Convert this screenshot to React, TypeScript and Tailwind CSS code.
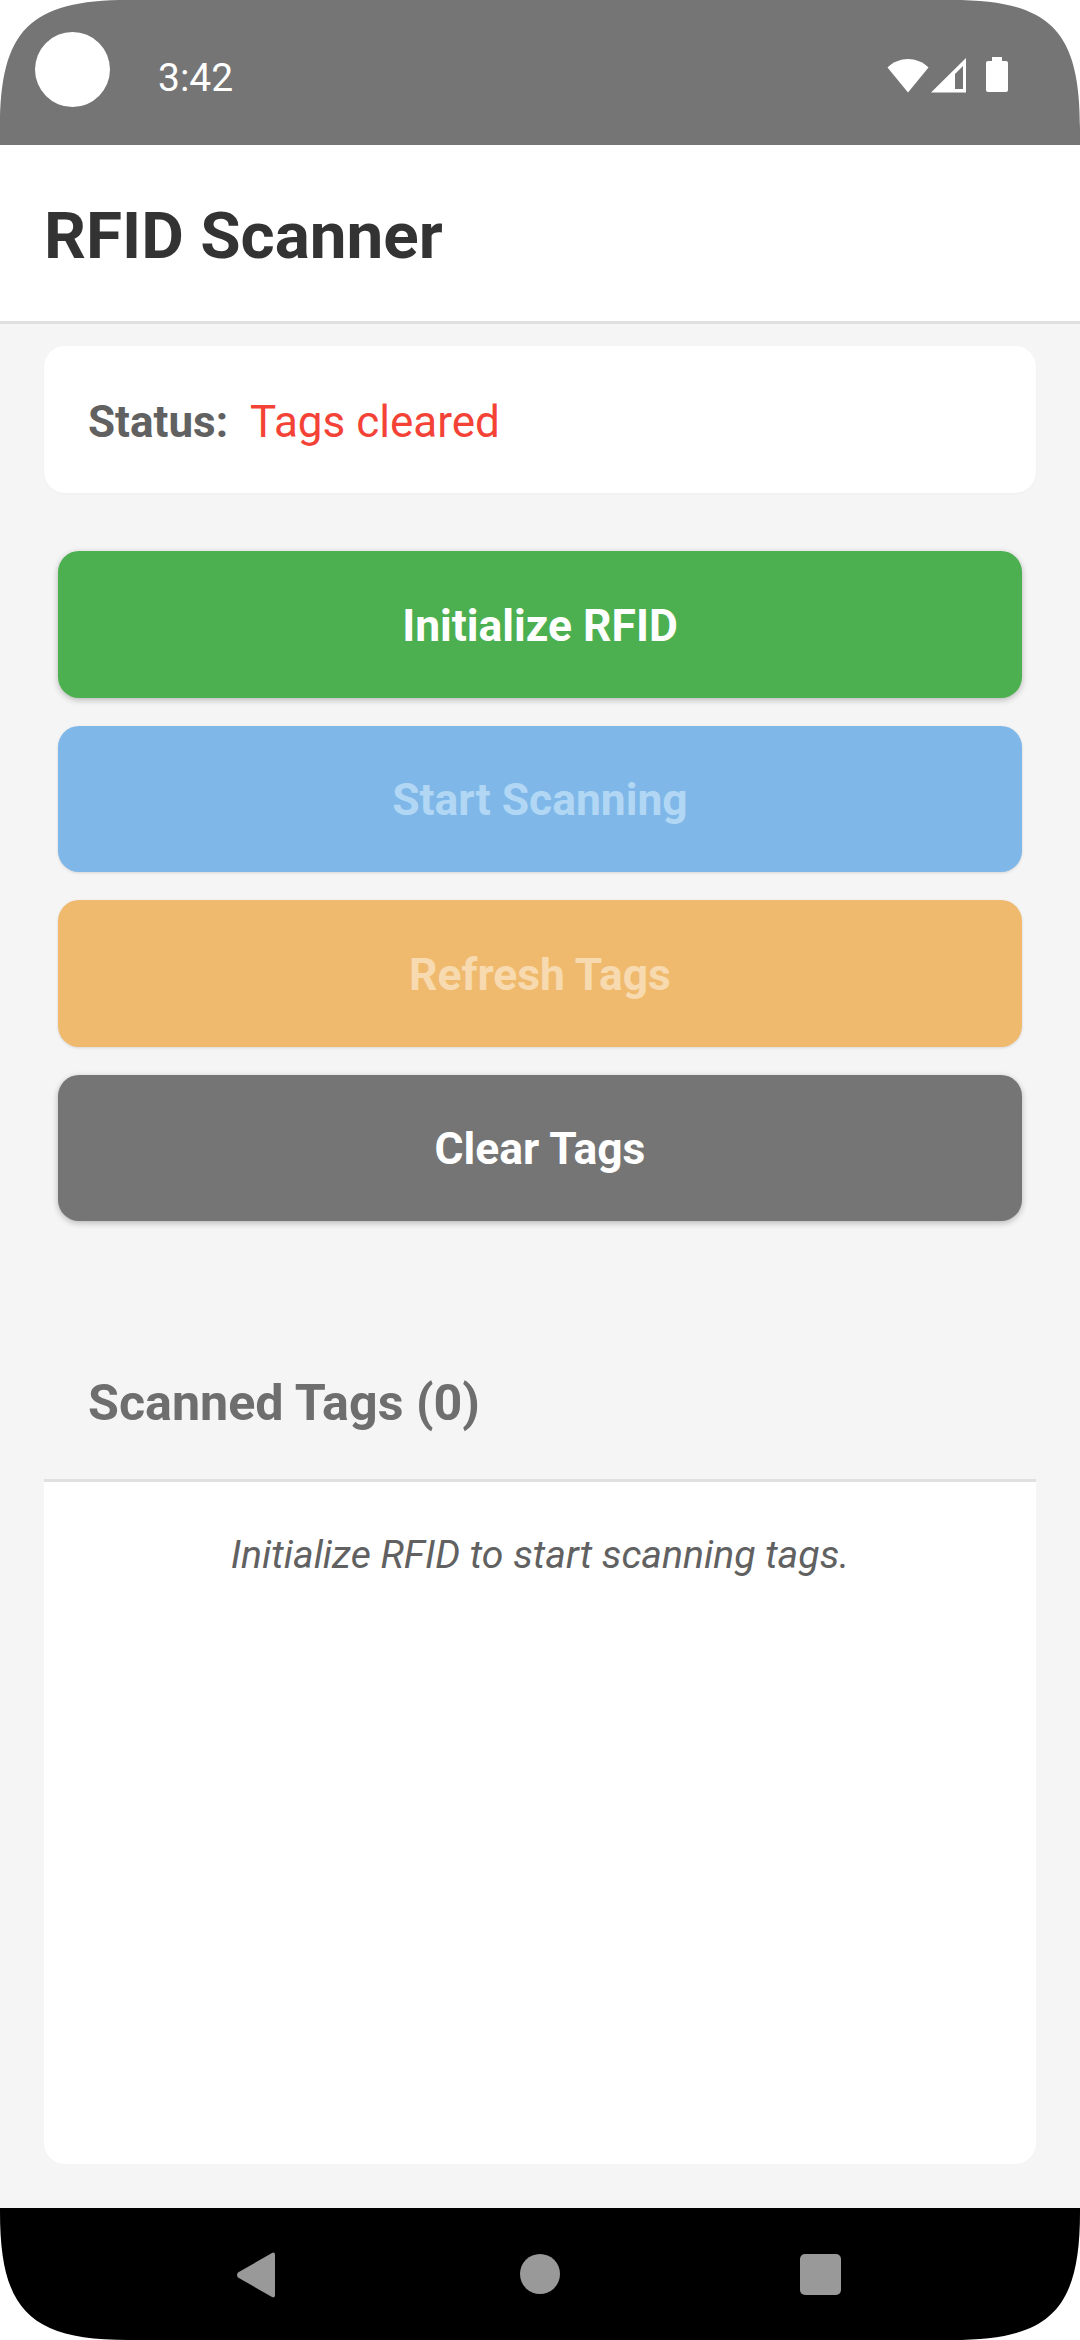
function Corner({ cls }: { cls: string }) {
  return (
    <svg width="128" height="128" viewBox="0 0 128 128" className={`absolute ${cls}`}>
      <path d="M0 0 H128 C30 0 0 30 0 128 Z" fill="#fff" />
    </svg>
  );
}

export default function App() {
  const buttons = [
    { label: "Initialize RFID", cls: "bg-[#4caf50] text-white shadow-[0_2px_6px_rgba(0,0,0,0.25)]" },
    { label: "Start Scanning", cls: "bg-[#7fb8e8] text-[#b2d7f4] shadow-[0_1px_3px_rgba(0,0,0,0.12)]" },
    { label: "Refresh Tags", cls: "bg-[#efba6e] text-[#f7dab0] shadow-[0_1px_3px_rgba(0,0,0,0.12)]" },
    { label: "Clear Tags", cls: "bg-[#757575] text-white shadow-[0_2px_6px_rgba(0,0,0,0.25)]" },
  ];
  return (
    <div className="relative w-[1080px] h-[2340px] bg-white flex flex-col overflow-hidden font-['Roboto',sans-serif]">
      <div className="h-[145px] shrink-0 bg-[#757575] flex items-start pl-[35px] pr-[72px] pt-[32px]">
        <div className="w-[75px] h-[75px] rounded-full bg-white shrink-0" />
        <span className="ml-[48px] mt-[23px] text-[39px] leading-[46px] text-white">3:42</span>
        <div className="ml-auto mt-[26px] flex items-start">
          <svg width="42" height="35" viewBox="0 0 42 35">
            <path d="M0.5 9.5 C12 -2 30 -2 41.5 9.5 L21 34.5 Z" fill="#fff" />
          </svg>
          <svg width="36" height="35" viewBox="0 0 36 35" className="ml-[2px]">
            <path fillRule="evenodd" d="M0 34.5 L35 0 V34.5 Z M24 31 H32 V8 L24 16 Z" fill="#fff" />
          </svg>
          <svg width="22" height="36" viewBox="0 0 22 36" className="ml-[19px] -mt-[1px]">
            <path d="M6 0 H16 V4 H20 a2 2 0 0 1 2 2 V33 a2 2 0 0 1 -2 2 H2 a2 2 0 0 1 -2 -2 V6 a2 2 0 0 1 2 -2 H6 Z" fill="#fff" />
          </svg>
        </div>
      </div>

      <header className="h-[179px] shrink-0 bg-white border-b-[3px] border-[#e0e0e0] flex items-center pl-[44px] pt-[6px]">
        <h1 className="text-[65.6px] leading-[76px] font-bold text-[#333333]">RFID Scanner</h1>
      </header>

      <main className="flex-1 min-h-0 bg-[#f5f5f5] flex flex-col px-[44px] pt-[22px] pb-[44px]">
        <div className="h-[147px] shrink-0 bg-white rounded-[21px] flex items-center pl-[44px] pt-[5px] text-[44px] leading-[52px] shadow-[0_1px_2px_rgba(0,0,0,0.03)]">
          <span className="font-bold text-[#616161]">Status:</span>
          <span className="ml-[22px] text-[#f44336]">Tags cleared</span>
        </div>

        <div className="mt-[58px] px-[14px] flex flex-col gap-[28px] shrink-0">
          {buttons.map((b) => (
            <button key={b.label} className={`h-[146.5px] rounded-[21px] pt-[3px] text-[44.4px] leading-[52px] font-bold text-center ${b.cls}`}>
              {b.label}
            </button>
          ))}
        </div>

        <div className="mt-[90px] h-[171px] shrink-0 border-b-[3px] border-[#e0e0e0] flex items-center pl-[44px] pt-[16px]">
          <h2 className="text-[50.2px] leading-[60px] font-bold text-[#6e6e6e]">Scanned Tags (0)</h2>
        </div>
        <div className="flex-1 min-h-0 bg-white rounded-b-[21px] pt-[50px] text-center">
          <p className="text-[39.2px] leading-[46px] italic text-[#616161]">Initialize RFID to start scanning tags.</p>
        </div>
      </main>

      <nav className="h-[132px] shrink-0 bg-black flex items-start pl-[236px] pt-[44px]">
        <svg width="40" height="46" viewBox="0 0 40 46">
          <path d="M36 1 Q39 -0.5 39 3 V43 Q39 46.5 36 45 L2 25.5 Q0 23 2 20.5 Z" fill="#999" />
        </svg>
        <div className="ml-[244px] w-[40px] h-[40px] mt-[2px] rounded-full bg-[#999]" />
        <div className="ml-[240px] w-[41px] h-[41px] mt-[2px] rounded-[5px] bg-[#999]" />
      </nav>

      <Corner cls="top-0 left-0" />
      <Corner cls="top-0 right-0 -scale-x-100" />
      <Corner cls="bottom-0 left-0 -scale-y-100" />
      <Corner cls="bottom-0 right-0 -scale-x-100 -scale-y-100" />
    </div>
  );
}
